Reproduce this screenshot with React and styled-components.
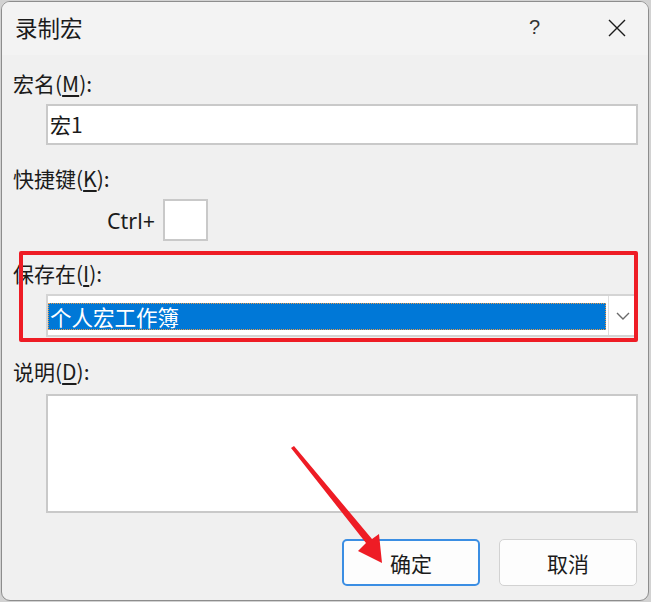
import styled, { createGlobalStyle } from "styled-components";

const GlobalStyle = createGlobalStyle`
  html, body {
    margin: 0;
    padding: 0;
    background: #d2d2d2;
  }
  * {
    box-sizing: border-box;
  }
`;

const FONT = `"Noto Sans CJK SC", "Noto Sans", sans-serif`;

const Page = styled.div`
  position: relative;
  width: 651px;
  height: 602px;
  padding: 1px 2px 1px 1px;
  font-family: ${FONT};
  color: #1b1b1b;
`;

const Dialog = styled.div`
  width: 648px;
  height: 600px;
  border: 1px solid #8d8d8d;
  border-radius: 9px;
  background: #f0f0f0;
  overflow: hidden;
  display: flex;
  flex-direction: column;
`;

const TitleBar = styled.div`
  height: 53px;
  flex: none;
  display: flex;
  align-items: center;
  padding: 0 22px 0 13px;
  background: #f3f3f3;
`;

const Title = styled.div`
  flex: 1;
  font-size: 22.5px;
  line-height: 28px;
  margin-top: -3px;
`;

const HelpMark = styled.div`
  font-family: "Liberation Sans", sans-serif;
  font-size: 20px;
  font-weight: 300;
  color: #333;
  margin-right: 68px;
  margin-top: -2px;
`;

const CloseIcon = styled.svg`
  width: 18px;
  height: 18px;
  margin-top: -2px;
`;

const Body = styled.div`
  flex: 1;
  display: flex;
  flex-direction: column;
  padding: 16px 10px 0 11px;
`;

const Label = styled.div`
  font-size: 21px;
  line-height: 24px;
  margin-top: ${(p) => p.$top || 0}px;
  margin-bottom: 3px;

  u {
    text-underline-offset: 3px;
  }
`;

const Field = styled.div`
  margin: ${(p) => p.$top || 6}px 0 0 33px;
  height: ${(p) => p.$h || 41}px;
  background: #fff;
  border: 2px solid #c9c9c9;
  font-size: 21px;
  line-height: 37px;
  padding-left: 2px;
`;

const KeyRow = styled.div`
  display: flex;
  align-items: center;
  margin: 6px 0 0 94px;
  gap: 8px;
  font-family: "Noto Sans", sans-serif;
  font-size: 21.5px;
`;

const KeyBox = styled.div`
  width: 45px;
  height: 42px;
  background: #fff;
  border: 2px solid #c9c9c9;
`;

const Combo = styled.div`
  display: flex;
  margin: 6px 0 0 33px;
  height: 43px;
  background: #fff;
  border: 2px solid #d4d4d4;
`;

const ComboValue = styled.div`
  flex: 1;
  margin: 7px 0 5px 0;
  background: #0078d7;
  border: 1px dotted #e79a4a;
  color: #fff;
  font-size: 21.5px;
  line-height: 26px;
  padding-left: 1px;
`;

const ComboArrow = styled.div`
  width: 28px;
  margin-left: 2px;
  border-left: 1px solid #dedede;
  display: flex;
  align-items: center;
  justify-content: center;
`;

const ButtonRow = styled.div`
  display: flex;
  justify-content: flex-end;
  gap: 19px;
  margin-top: 26px;
  padding-right: 1px;
`;

const Button = styled.button`
  width: 138px;
  height: 47px;
  border-radius: 5px;
  background: #fdfdfd;
  font-family: ${FONT};
  font-size: 21px;
  color: #1b1b1b;
  border: ${(p) => (p.$primary ? "2px solid #3b8ee3" : "1px solid #d2d2d2")};
  padding: 0;
`;

const Highlight = styled.div`
  position: absolute;
  left: 19px;
  top: 251px;
  width: 619px;
  height: 91px;
  border: 4px solid #ee1c25;
  border-radius: 2px;
  pointer-events: none;
`;

const Annotation = styled.svg`
  position: absolute;
  left: 0;
  top: 0;
  pointer-events: none;
`;

export default function App() {
  return (
    <Page>
      <GlobalStyle />
      <Dialog>
        <TitleBar>
          <Title>录制宏</Title>
          <HelpMark>?</HelpMark>
          <CloseIcon viewBox="0 0 18 18">
            <path d="M1 1 L17 17 M17 1 L1 17" stroke="#1b1b1b" strokeWidth="1.4" fill="none" />
          </CloseIcon>
        </TitleBar>
        <Body>
          <Label>
            宏名(<u>M</u>):
          </Label>
          <Field>宏1</Field>

          <Label $top={21}>
            快捷键(<u>K</u>):
          </Label>
          <KeyRow>
            Ctrl+
            <KeyBox />
          </KeyRow>

          <Label $top={20}>
            保存在(<u>I</u>):
          </Label>
          <Combo>
            <ComboValue>个人宏工作簿</ComboValue>
            <ComboArrow>
              <svg width="14" height="8" viewBox="0 0 14 8">
                <path d="M1 1 L7 7 L13 1" stroke="#6a6a6a" strokeWidth="1.4" fill="none" />
              </svg>
            </ComboArrow>
          </Combo>

          <Label $top={22}>
            说明(<u>D</u>):
          </Label>
          <Field $top={8} $h={119} />

          <ButtonRow>
            <Button $primary>确定</Button>
            <Button>取消</Button>
          </ButtonRow>
        </Body>
      </Dialog>

      <Highlight />
      <Annotation width="651" height="602" viewBox="0 0 651 602">
        <polygon
          points="291,448 294,446 372,539 379,534 382,563 358,551 366,543"
          fill="#ee1c25"
        />
      </Annotation>
    </Page>
  );
}
